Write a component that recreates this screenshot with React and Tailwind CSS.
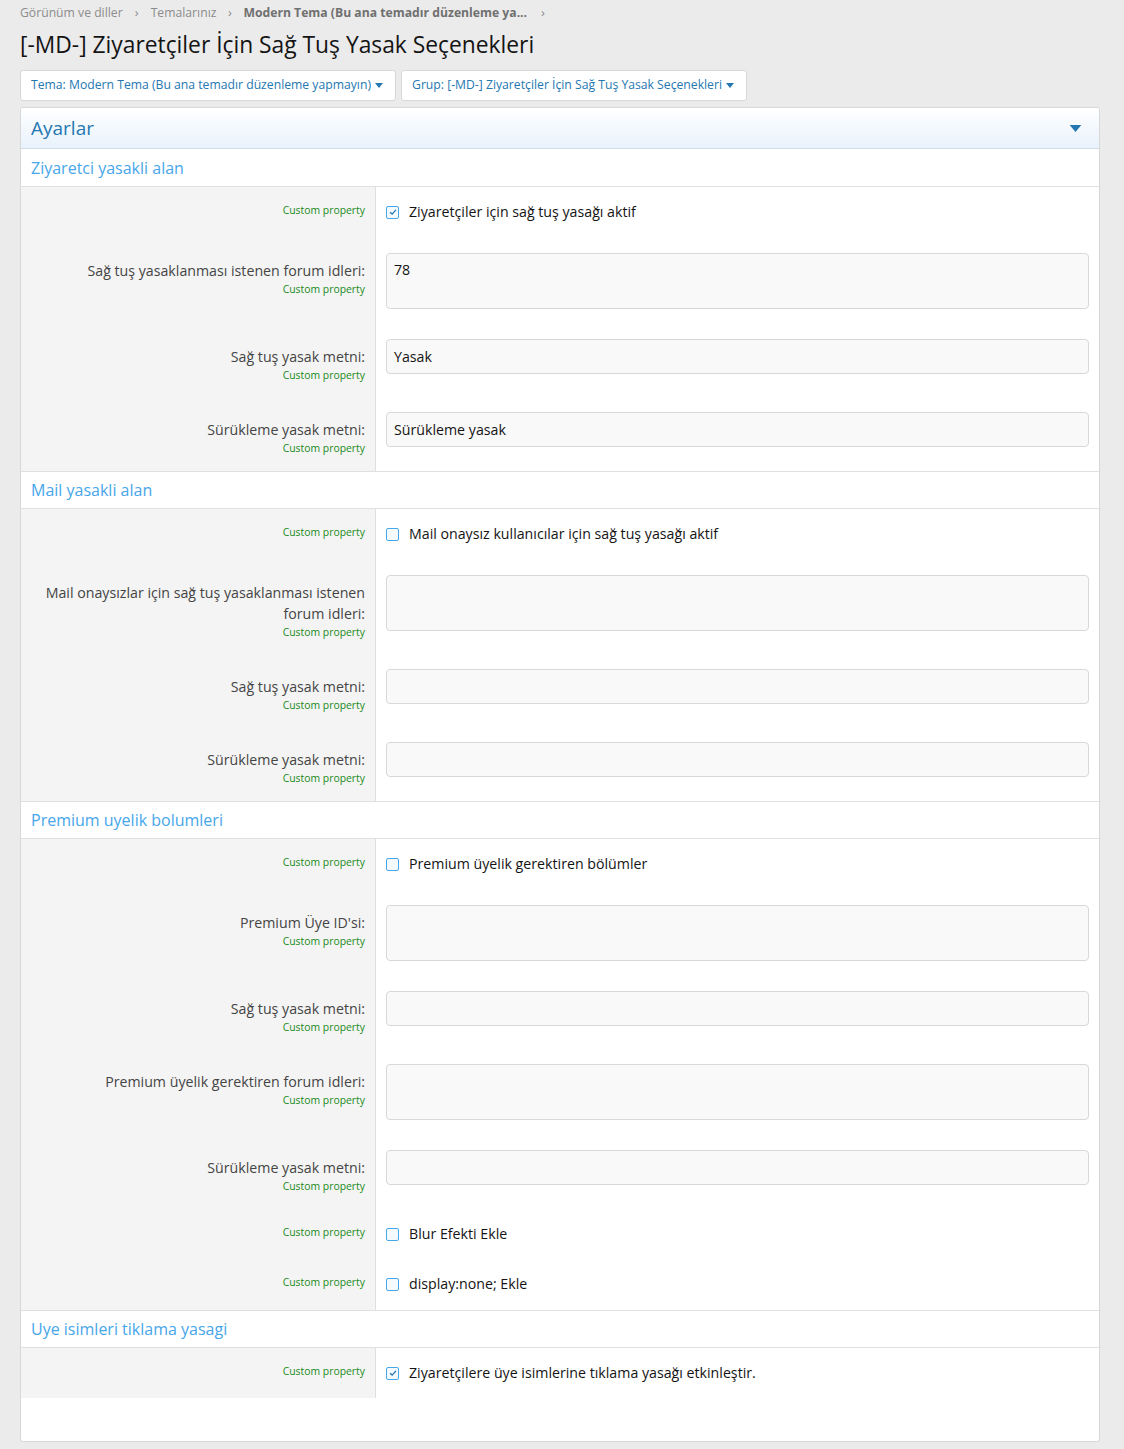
import React from 'react';

const font = { fontFamily: '"Segoe UI", "Open Sans", "Noto Sans", sans-serif' };

function Caret({ className }) {
  return (
    <svg viewBox="0 0 10 6" className={className}>
      <path d="M0 0 L10 0 L5 6 Z" fill="currentColor" />
    </svg>
  );
}

function Checkbox({ checked }) {
  return (
    <span className="w-[13px] h-[13px] border border-[#47a7eb] rounded-[2px] bg-[#f5faff] flex items-center justify-center shrink-0">
      {checked && (
        <svg viewBox="0 0 12 12" className="w-[10px] h-[10px]">
          <path d="M2.5 6.2 L5 8.5 L9.5 3.5" fill="none" stroke="#2577b1" strokeWidth="1.6" />
        </svg>
      )}
    </span>
  );
}

function Hint() {
  return <div className="text-[10.4px] leading-[16px] text-[#1a8a1a]">Custom property</div>;
}

// one settings row: gray label cell on the left, control cell on the right
function Row({ h, label, children }) {
  return (
    <div className={`flex ${h}`}>
      <div className="w-[355px] shrink-0 bg-[#f4f4f4] border-r border-[#dfdfdf] pr-[10px] pt-[17px] text-right">
        {label.map((l, i) => (
          <div key={i} className="text-[14.2px] leading-[21px] text-[#444444]">{l}</div>
        ))}
        <Hint />
      </div>
      <div className="flex-1 px-[10px] pt-[10px]">{children}</div>
    </div>
  );
}

function CheckRow({ h, text, checked }) {
  return (
    <div className={`flex ${h}`}>
      <div className="w-[355px] shrink-0 bg-[#f4f4f4] border-r border-[#dfdfdf] pr-[10px] pt-[15px] text-right">
        <Hint />
      </div>
      <div className="flex-1 px-[10px] pt-[15px] flex items-start">
        <label className="flex items-center gap-[10px] text-[14.2px] leading-[20px] text-[#141414]">
          <Checkbox checked={checked} />
          {text}
        </label>
      </div>
    </div>
  );
}

function TextArea({ value }) {
  return (
    <div className="h-[56px] bg-[#f9f9f9] border border-[#d8d8d8] rounded-[4px] px-[7px] py-[6px] text-[14.2px] leading-[20px] text-[#141414]">
      {value}
    </div>
  );
}

function Input({ value }) {
  return (
    <div className="h-[35px] bg-[#f9f9f9] border border-[#d8d8d8] rounded-[4px] px-[7px] flex items-center text-[14.2px] text-[#141414]">
      {value}
    </div>
  );
}

function SectionHead({ title, first }) {
  return (
    <div className={`h-[38px] flex items-center px-[10px] border-b border-[#e0e0e0] ${first ? '' : 'border-t'} bg-white`}>
      <span className="text-[16px] text-[#47a6ea]">{title}</span>
    </div>
  );
}

export default function App() {
  return (
    <div className="min-h-[1449px] bg-[#ebebeb] pl-[20px] pr-[24px] pb-[8px]" style={font}>
      <div className="flex items-center h-[25px] pt-[1px] text-[12.2px] text-[#8c8c8c]">
        <span>Görünüm ve diller</span>
        <span className="text-[13px] w-[28px] text-center">›</span>
        <span>Temalarınız</span>
        <span className="text-[13px] w-[27px] text-center">›</span>
        <span className="font-bold text-[#707070]">Modern Tema (Bu ana temadır düzenleme ya...</span>
        <span className="text-[13px] w-[32px] text-center">›</span>
      </div>
      <h1 className="text-[22.8px] leading-[32px] text-[#141414] mt-[4px]">[-MD-] Ziyaretçiler İçin Sağ Tuş Yasak Seçenekleri</h1>
      <div className="flex gap-[5px] mt-[9px]">
        <button className="h-[31px] bg-white border border-[#d8d8d8] rounded-[3px] pl-[10px] pr-[12px] flex items-center gap-[4px] text-[12.2px] text-[#2577b1]">
          Tema: Modern Tema (Bu ana temadır düzenleme yapmayın)
          <Caret className="w-[8px] h-[5px]" />
        </button>
        <button className="h-[31px] bg-white border border-[#d8d8d8] rounded-[3px] pl-[10px] pr-[12px] flex items-center gap-[4px] text-[12.2px] text-[#2577b1]">
          Grup: [-MD-] Ziyaretçiler İçin Sağ Tuş Yasak Seçenekleri
          <Caret className="w-[8px] h-[5px]" />
        </button>
      </div>

      <div className="mt-[6px] bg-white border border-[#d8d8d8] rounded-[3px] h-[1335px] overflow-hidden">
        <div className="h-[41px] flex items-center justify-between px-[10px] bg-gradient-to-b from-[#ffffff] to-[#e8f2fc] border-b border-[#d3dbe4]">
          <span className="text-[19px] text-[#2577b1]">Ayarlar</span>
          <Caret className="w-[13px] h-[7px] text-[#2577b1] mr-[7px]" />
        </div>

        <SectionHead title="Ziyaretci yasakli alan" first />
        <CheckRow h="h-[56px]" text="Ziyaretçiler için sağ tuş yasağı aktif" checked />
        <Row h="h-[86px]" label={['Sağ tuş yasaklanması istenen forum idleri:']}>
          <TextArea value="78" />
        </Row>
        <Row h="h-[73px]" label={['Sağ tuş yasak metni:']}>
          <Input value="Yasak" />
        </Row>
        <Row h="h-[69px]" label={['Sürükleme yasak metni:']}>
          <Input value="Sürükleme yasak" />
        </Row>

        <SectionHead title="Mail yasakli alan" />
        <CheckRow h="h-[56px]" text="Mail onaysız kullanıcılar için sağ tuş yasağı aktif" />
        <Row h="h-[94px]" label={['Mail onaysızlar için sağ tuş yasaklanması istenen', 'forum idleri:']}>
          <TextArea />
        </Row>
        <Row h="h-[73px]" label={['Sağ tuş yasak metni:']}>
          <Input />
        </Row>
        <Row h="h-[69px]" label={['Sürükleme yasak metni:']}>
          <Input />
        </Row>

        <SectionHead title="Premium uyelik bolumleri" />
        <CheckRow h="h-[56px]" text="Premium üyelik gerektiren bölümler" />
        <Row h="h-[86px]" label={["Premium Üye ID'si:"]}>
          <TextArea />
        </Row>
        <Row h="h-[73px]" label={['Sağ tuş yasak metni:']}>
          <Input />
        </Row>
        <Row h="h-[86px]" label={['Premium üyelik gerektiren forum idleri:']}>
          <TextArea />
        </Row>
        <Row h="h-[69px]" label={['Sürükleme yasak metni:']}>
          <Input />
        </Row>
        <CheckRow h="h-[50px]" text="Blur Efekti Ekle" />
        <CheckRow h="h-[51px]" text="display:none; Ekle" />

        <SectionHead title="Uye isimleri tiklama yasagi" />
        <CheckRow h="h-[50px]" text="Ziyaretçilere üye isimlerine tıklama yasağı etkinleştir." checked />
      </div>
    </div>
  );
}
